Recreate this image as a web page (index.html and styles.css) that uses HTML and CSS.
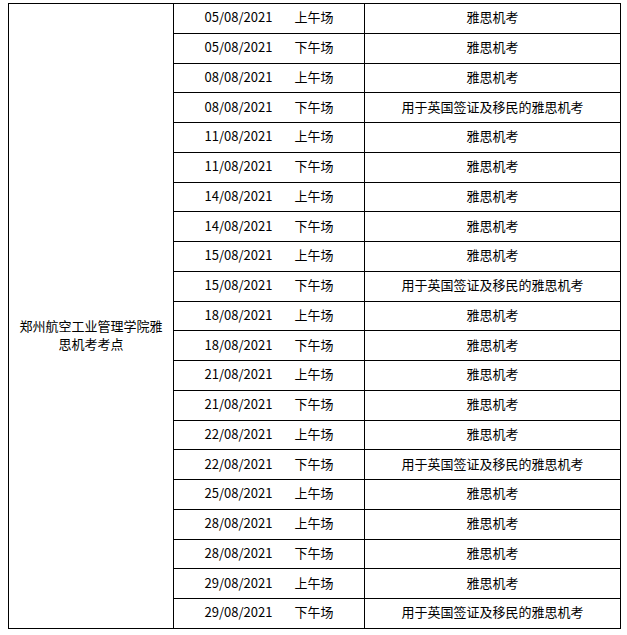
FILE: index.html
```html
<!DOCTYPE html>
<html lang="zh-CN">
<head>
<meta charset="utf-8">
<title>雅思机考考点</title>
<link rel="stylesheet" href="styles.css">
</head>
<body>
<table class="exam-table">
  <colgroup>
    <col class="col-site">
    <col class="col-date">
    <col class="col-type">
  </colgroup>
  <tbody>
    <tr>
      <td class="site" rowspan="21"><div class="site-name">郑州航空工业管理学院雅思机考考点</div></td>
      <td class="date"><span class="d">05/08/2021</span><span class="s">上午场</span></td>
      <td class="type">雅思机考</td>
    </tr>
    <tr><td class="date"><span class="d">05/08/2021</span><span class="s">下午场</span></td><td class="type">雅思机考</td></tr>
    <tr><td class="date"><span class="d">08/08/2021</span><span class="s">上午场</span></td><td class="type">雅思机考</td></tr>
    <tr><td class="date"><span class="d">08/08/2021</span><span class="s">下午场</span></td><td class="type">用于英国签证及移民的雅思机考</td></tr>
    <tr><td class="date"><span class="d">11/08/2021</span><span class="s">上午场</span></td><td class="type">雅思机考</td></tr>
    <tr><td class="date"><span class="d">11/08/2021</span><span class="s">下午场</span></td><td class="type">雅思机考</td></tr>
    <tr><td class="date"><span class="d">14/08/2021</span><span class="s">上午场</span></td><td class="type">雅思机考</td></tr>
    <tr><td class="date"><span class="d">14/08/2021</span><span class="s">下午场</span></td><td class="type">雅思机考</td></tr>
    <tr><td class="date"><span class="d">15/08/2021</span><span class="s">上午场</span></td><td class="type">雅思机考</td></tr>
    <tr><td class="date"><span class="d">15/08/2021</span><span class="s">下午场</span></td><td class="type">用于英国签证及移民的雅思机考</td></tr>
    <tr><td class="date"><span class="d">18/08/2021</span><span class="s">上午场</span></td><td class="type">雅思机考</td></tr>
    <tr><td class="date"><span class="d">18/08/2021</span><span class="s">下午场</span></td><td class="type">雅思机考</td></tr>
    <tr><td class="date"><span class="d">21/08/2021</span><span class="s">上午场</span></td><td class="type">雅思机考</td></tr>
    <tr><td class="date"><span class="d">21/08/2021</span><span class="s">下午场</span></td><td class="type">雅思机考</td></tr>
    <tr><td class="date"><span class="d">22/08/2021</span><span class="s">上午场</span></td><td class="type">雅思机考</td></tr>
    <tr><td class="date"><span class="d">22/08/2021</span><span class="s">下午场</span></td><td class="type">用于英国签证及移民的雅思机考</td></tr>
    <tr><td class="date"><span class="d">25/08/2021</span><span class="s">上午场</span></td><td class="type">雅思机考</td></tr>
    <tr><td class="date"><span class="d">28/08/2021</span><span class="s">上午场</span></td><td class="type">雅思机考</td></tr>
    <tr><td class="date"><span class="d">28/08/2021</span><span class="s">下午场</span></td><td class="type">雅思机考</td></tr>
    <tr><td class="date"><span class="d">29/08/2021</span><span class="s">上午场</span></td><td class="type">雅思机考</td></tr>
    <tr><td class="date"><span class="d">29/08/2021</span><span class="s">下午场</span></td><td class="type">用于英国签证及移民的雅思机考</td></tr>
  </tbody>
</table>
</body>
</html>
```

FILE: styles.css
```css
html, body {
  background: #ffffff;
}
body {
  margin: 3px 0 0 8px;
  font-family: "Noto Sans CJK SC", "Noto Sans", sans-serif;
  font-size: 13px;
  color: #000000;
}
.exam-table {
  border-collapse: collapse;
  table-layout: fixed;
  width: 612px;
}
.col-site { width: 165px; }
.col-date { width: 191px; }
.col-type { width: 256px; }
.exam-table tr {
  height: 29.75px;
}
.exam-table td {
  border: 1px solid #000000;
  padding: 0 0 2px 0;
  text-align: center;
  vertical-align: middle;
  line-height: 18px;
}
.exam-table td.site {
  padding: 38px 10px 0 10px;
}
.site-name {
  line-height: 18px;
}
.date .d {
  display: inline-block;
}
.date .s {
  display: inline-block;
  margin-left: 22px;
}
```
